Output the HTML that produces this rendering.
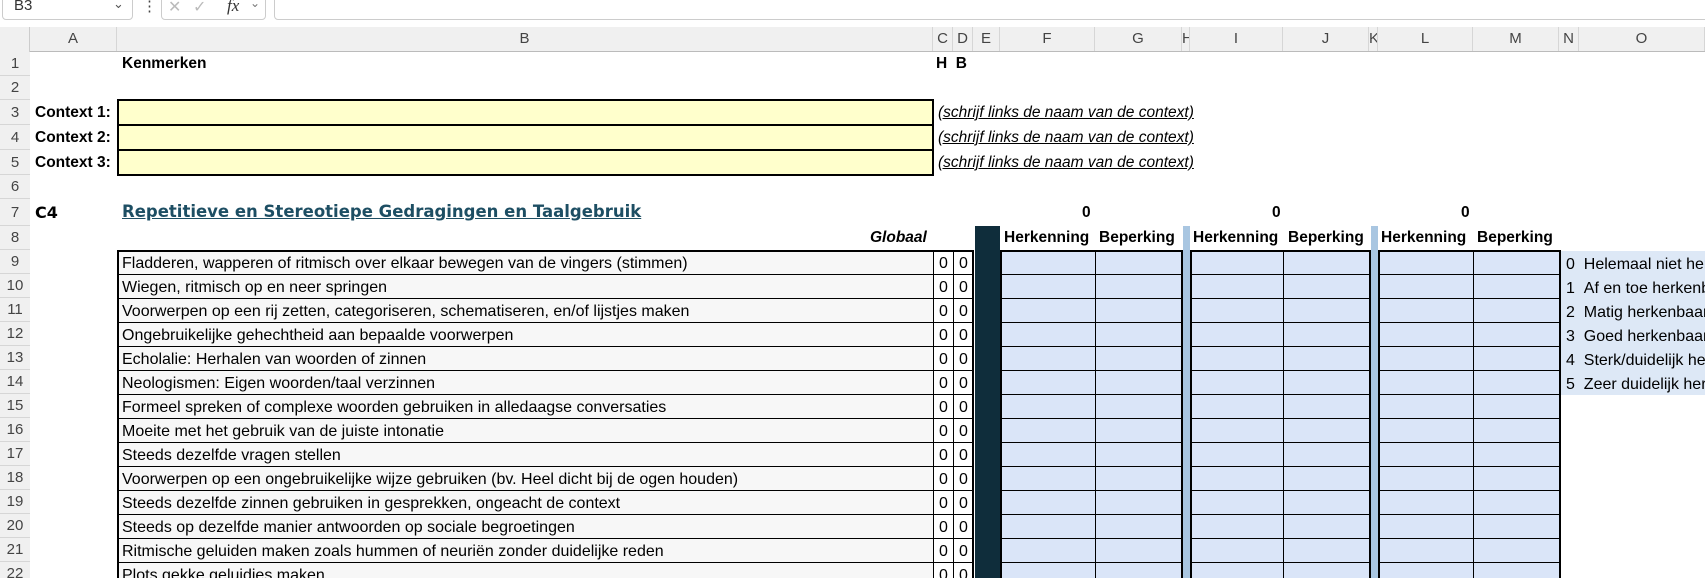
<!DOCTYPE html>
<html><head><meta charset="utf-8"><style>
*{box-sizing:border-box;margin:0;padding:0}
html,body{width:1705px;height:578px;overflow:hidden}
body{background:#fff;font-family:"Liberation Sans",sans-serif;position:relative;color:#000}
.a{position:absolute}
.hdr{background:#f0f0f0}
.cl{position:absolute;top:27px;height:24px;font-size:15px;color:#444;text-align:center;line-height:24px;border-right:1px solid #d6d6d6;overflow:hidden}
.rn{position:absolute;left:0;width:30px;font-size:15px;color:#444;text-align:center;border-bottom:1px solid #d6d6d6;background:#f0f0f0}
.t{font-size:15.5px;white-space:nowrap;position:absolute}
.b{font-weight:bold}
.hint{font-style:italic;text-decoration:underline;font-size:15.5px;position:absolute;left:938px;white-space:nowrap}
</style></head><body>
<div class="a" style="left:0;top:0;width:1705px;height:27px;background:#fff"></div>
<div class="a" style="left:2px;top:-8px;width:131px;height:28px;border:1px solid #ccc;border-radius:4px"></div>
<div class="t" style="left:14px;top:-3px;color:#333;font-size:15px">B3</div>
<div class="t" style="left:113px;top:-4px;color:#555;font-size:13px">&#8964;</div>
<div class="t" style="left:142px;top:-3px;color:#444;font-size:15px">&#8942;</div>
<div class="a" style="left:161px;top:-8px;width:105px;height:28px;border:1px solid #ccc;border-radius:4px"></div>
<div class="t" style="left:168px;top:-3px;color:#bbb;font-size:16px">&#10005;</div>
<div class="t" style="left:193px;top:-3px;color:#bbb;font-size:16px">&#10003;</div>
<div class="t" style="left:227px;top:-4px;color:#333;font-size:17px;font-style:italic;font-family:'Liberation Serif',serif">fx</div>
<div class="t" style="left:250px;top:-4px;color:#777;font-size:12px">&#8964;</div>
<div class="a" style="left:274px;top:-8px;width:1440px;height:28px;border:1px solid #ccc;border-radius:4px"></div>
<div class="a hdr" style="left:0;top:27px;width:1705px;height:25px;border-bottom:1px solid #bbb"></div>
<div class="a hdr" style="left:0;top:27px;width:30px;height:551px;border-right:1px solid #ccc"></div>
<div class="cl" style="left:30px;width:87px">A</div>
<div class="cl" style="left:117px;width:816px">B</div>
<div class="cl" style="left:933px;width:20px">C</div>
<div class="cl" style="left:953px;width:20px">D</div>
<div class="cl" style="left:973px;width:27px">E</div>
<div class="cl" style="left:1000px;width:95px">F</div>
<div class="cl" style="left:1095px;width:87px">G</div>
<div class="cl" style="left:1182px;width:8px">H</div>
<div class="cl" style="left:1190px;width:93px">I</div>
<div class="cl" style="left:1283px;width:86px">J</div>
<div class="cl" style="left:1369px;width:9px">K</div>
<div class="cl" style="left:1378px;width:95px">L</div>
<div class="cl" style="left:1473px;width:86px">M</div>
<div class="cl" style="left:1559px;width:20px">N</div>
<div class="cl" style="left:1579px;width:126px">O</div>
<div class="rn" style="top:52px;height:24px;line-height:24px">1</div>
<div class="rn" style="top:76px;height:24px;line-height:24px">2</div>
<div class="rn" style="top:100px;height:25px;line-height:25px">3</div>
<div class="rn" style="top:125px;height:25px;line-height:25px">4</div>
<div class="rn" style="top:150px;height:25px;line-height:25px">5</div>
<div class="rn" style="top:175px;height:24px;line-height:24px">6</div>
<div class="rn" style="top:199px;height:27px;line-height:27px">7</div>
<div class="rn" style="top:226px;height:24px;line-height:24px">8</div>
<div class="rn" style="top:250px;height:24px;line-height:24px">9</div>
<div class="rn" style="top:274px;height:24px;line-height:24px">10</div>
<div class="rn" style="top:298px;height:24px;line-height:24px">11</div>
<div class="rn" style="top:322px;height:24px;line-height:24px">12</div>
<div class="rn" style="top:346px;height:24px;line-height:24px">13</div>
<div class="rn" style="top:370px;height:24px;line-height:24px">14</div>
<div class="rn" style="top:394px;height:24px;line-height:24px">15</div>
<div class="rn" style="top:418px;height:24px;line-height:24px">16</div>
<div class="rn" style="top:442px;height:24px;line-height:24px">17</div>
<div class="rn" style="top:466px;height:24px;line-height:24px">18</div>
<div class="rn" style="top:490px;height:24px;line-height:24px">19</div>
<div class="rn" style="top:514px;height:24px;line-height:24px">20</div>
<div class="rn" style="top:538px;height:24px;line-height:24px">21</div>
<div class="rn" style="top:562px;height:24px;line-height:24px">22</div>
<div class="t b" style="left:122px;top:55px">Kenmerken</div>
<div class="t b" style="left:936px;top:55px">H&nbsp;&nbsp;B</div>
<div class="t b" style="left:35px;top:104px">Context 1:</div>
<div class="t b" style="left:35px;top:129px">Context 2:</div>
<div class="t b" style="left:35px;top:154px">Context 3:</div>
<div class="a" style="left:117px;top:99px;width:817px;height:77px;background:#ffffcc;border:2px solid #000"></div>
<div class="a" style="left:117px;top:124px;width:817px;height:2px;background:#000"></div>
<div class="a" style="left:117px;top:149px;width:817px;height:2px;background:#000"></div>
<div class="hint" style="top:104px">(schrijf links de naam van de context)</div>
<div class="hint" style="top:129px">(schrijf links de naam van de context)</div>
<div class="hint" style="top:154px">(schrijf links de naam van de context)</div>
<div class="t b" style="left:35px;top:203px;font-family:'DejaVu Sans',sans-serif;font-size:16px">C4</div>
<div class="t b" style="left:122px;top:202px;font-family:'DejaVu Sans',sans-serif;font-size:16.5px;color:#1d4e63;text-decoration:underline">Repetitieve en Stereotiepe Gedragingen en Taalgebruik</div>
<div class="t b" style="left:1082px;top:204px">0</div>
<div class="t b" style="left:1272px;top:204px">0</div>
<div class="t b" style="left:1461px;top:204px">0</div>
<div class="t b" style="left:870px;top:229px;font-style:italic">Globaal</div>
<div class="t b" style="left:1004px;top:229px">Herkenning</div>
<div class="t b" style="left:1099px;top:229px">Beperking</div>
<div class="t b" style="left:1193px;top:229px">Herkenning</div>
<div class="t b" style="left:1288px;top:229px">Beperking</div>
<div class="t b" style="left:1381px;top:229px">Herkenning</div>
<div class="t b" style="left:1477px;top:229px">Beperking</div>
<div class="a" style="left:975px;top:226px;width:25px;height:352px;background:#0f2d3b"></div>
<div class="a" style="left:1183px;top:226px;width:7px;height:352px;background:#a9c6e1"></div>
<div class="a" style="left:1371px;top:226px;width:7px;height:352px;background:#a9c6e1"></div>
<div class="a" style="left:1561px;top:251px;width:144px;height:144px;background:#dde8f6"></div>
<div class="t" style="left:1566px;top:253px;line-height:24px;font-size:16px">0 &nbsp;Helemaal niet herkenbaar<br>1 &nbsp;Af en toe herkenbaar<br>2 &nbsp;Matig herkenbaar<br>3 &nbsp;Goed herkenbaar<br>4 &nbsp;Sterk/duidelijk herkenbaar<br>5 &nbsp;Zeer duidelijk herkenbaar</div>
<svg class="a" style="left:0;top:0" width="1705" height="578">
<g fill="#dae5f8"><rect x="1000" y="250" width="183" height="340"/><rect x="1190" y="250" width="181" height="340"/><rect x="1378" y="250" width="183" height="340"/></g>
<rect x="117" y="250" width="816" height="340" fill="#f7f7f7"/>
<g stroke="#000" stroke-width="1">
<line x1="933.5" y1="250" x2="933.5" y2="578"/><line x1="953.5" y1="250" x2="953.5" y2="578"/>
<line x1="1095.5" y1="250" x2="1095.5" y2="578"/><line x1="1283.5" y1="250" x2="1283.5" y2="578"/><line x1="1473.5" y1="250" x2="1473.5" y2="578"/>
</g>
<g stroke="#000" stroke-width="1">
<path d="M117 274.5H974M1000 274.5H1183M1190 274.5H1371M1378 274.5H1561"/>
<path d="M117 298.5H974M1000 298.5H1183M1190 298.5H1371M1378 298.5H1561"/>
<path d="M117 322.5H974M1000 322.5H1183M1190 322.5H1371M1378 322.5H1561"/>
<path d="M117 346.5H974M1000 346.5H1183M1190 346.5H1371M1378 346.5H1561"/>
<path d="M117 370.5H974M1000 370.5H1183M1190 370.5H1371M1378 370.5H1561"/>
<path d="M117 394.5H974M1000 394.5H1183M1190 394.5H1371M1378 394.5H1561"/>
<path d="M117 418.5H974M1000 418.5H1183M1190 418.5H1371M1378 418.5H1561"/>
<path d="M117 442.5H974M1000 442.5H1183M1190 442.5H1371M1378 442.5H1561"/>
<path d="M117 466.5H974M1000 466.5H1183M1190 466.5H1371M1378 466.5H1561"/>
<path d="M117 490.5H974M1000 490.5H1183M1190 490.5H1371M1378 490.5H1561"/>
<path d="M117 514.5H974M1000 514.5H1183M1190 514.5H1371M1378 514.5H1561"/>
<path d="M117 538.5H974M1000 538.5H1183M1190 538.5H1371M1378 538.5H1561"/>
<path d="M117 562.5H974M1000 562.5H1183M1190 562.5H1371M1378 562.5H1561"/>
</g>
<g stroke="#000" stroke-width="2" fill="none">
<rect x="118" y="251" width="855" height="340"/>
<rect x="1001" y="251" width="181" height="340"/>
<rect x="1191" y="251" width="179" height="340"/>
<rect x="1379" y="251" width="181" height="340"/>
</g>
<g font-family="Liberation Sans, sans-serif" font-size="16" fill="#000">
<text x="122" y="268">Fladderen, wapperen of ritmisch over elkaar bewegen van de vingers (stimmen)</text>
<text x="122" y="292">Wiegen, ritmisch op en neer springen</text>
<text x="122" y="316">Voorwerpen op een rij zetten, categoriseren, schematiseren, en/of lijstjes maken</text>
<text x="122" y="340">Ongebruikelijke gehechtheid aan bepaalde voorwerpen</text>
<text x="122" y="364">Echolalie: Herhalen van woorden of zinnen</text>
<text x="122" y="388">Neologismen: Eigen woorden/taal verzinnen</text>
<text x="122" y="412">Formeel spreken of complexe woorden gebruiken in alledaagse conversaties</text>
<text x="122" y="436">Moeite met het gebruik van de juiste intonatie</text>
<text x="122" y="460">Steeds dezelfde vragen stellen</text>
<text x="122" y="484">Voorwerpen op een ongebruikelijke wijze gebruiken (bv. Heel dicht bij de ogen houden)</text>
<text x="122" y="508">Steeds dezelfde zinnen gebruiken in gesprekken, ongeacht de context</text>
<text x="122" y="532">Steeds op dezelfde manier antwoorden op sociale begroetingen</text>
<text x="122" y="556">Ritmische geluiden maken zoals hummen of neuriën zonder duidelijke reden</text>
<text x="122" y="580">Plots gekke geluidjes maken</text>
</g>
<g font-family="Liberation Sans, sans-serif" font-size="16" fill="#000">
<text x="939" y="268">0</text><text x="959" y="268">0</text>
<text x="939" y="292">0</text><text x="959" y="292">0</text>
<text x="939" y="316">0</text><text x="959" y="316">0</text>
<text x="939" y="340">0</text><text x="959" y="340">0</text>
<text x="939" y="364">0</text><text x="959" y="364">0</text>
<text x="939" y="388">0</text><text x="959" y="388">0</text>
<text x="939" y="412">0</text><text x="959" y="412">0</text>
<text x="939" y="436">0</text><text x="959" y="436">0</text>
<text x="939" y="460">0</text><text x="959" y="460">0</text>
<text x="939" y="484">0</text><text x="959" y="484">0</text>
<text x="939" y="508">0</text><text x="959" y="508">0</text>
<text x="939" y="532">0</text><text x="959" y="532">0</text>
<text x="939" y="556">0</text><text x="959" y="556">0</text>
<text x="939" y="580">0</text><text x="959" y="580">0</text>
</g>
</svg>
</body></html>
